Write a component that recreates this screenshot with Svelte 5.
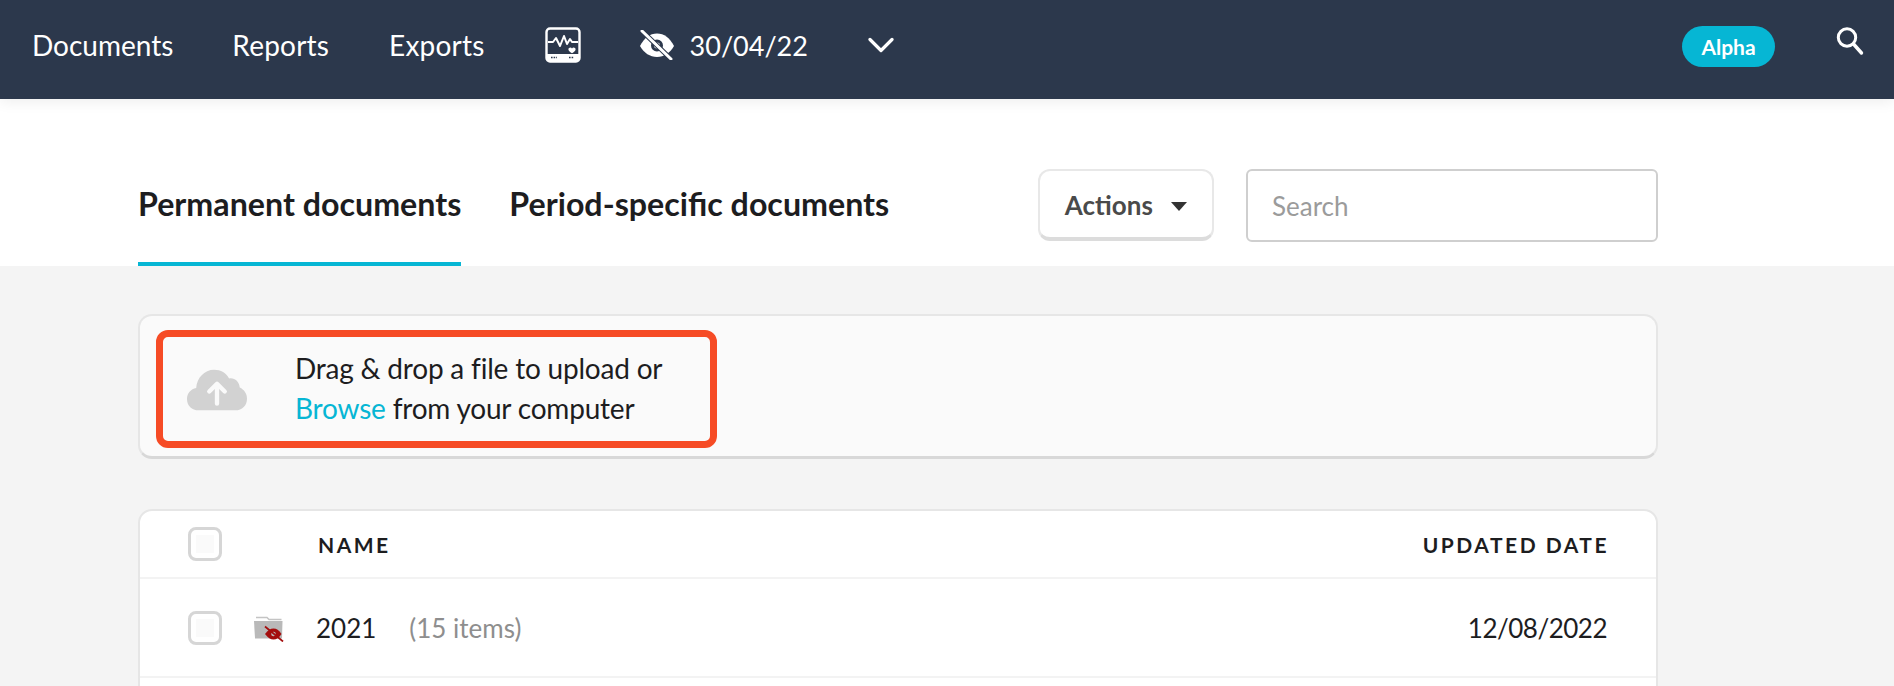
<script>
  let tabs = ["Permanent documents", "Period-specific documents"];
  let active = 0;
</script>

<div class="page">
  <nav class="topbar">
    <a class="nav-link first" href="#docs">Documents</a>
    <a class="nav-link" href="#reports">Reports</a>
    <a class="nav-link" href="#exports">Exports</a>
    <svg class="monitor" width="36" height="36" viewBox="0 0 36 36" fill="none">
      <rect x="1.5" y="1.5" width="33" height="33" rx="3.5" stroke="#fff" stroke-width="2.4" />
      <path d="M2 27h32v4a3 3 0 0 1-3 3H5a3 3 0 0 1-3-3z" fill="#fff" />
      <path d="M3 15h5l3-4 4 8 4-10 3 8 3-5 2 3h6" stroke="#fff" stroke-width="2" stroke-linejoin="round" />
      <path d="M27 21.5c1-1.6 3.6-.9 3.6 1 0 1.5-2 2.700-3.600 3.700-1.600-1-3.600-2.200-3.600-3.700 0-1.900 2.600-2.600 3.600-1z" fill="#fff" />
      <path d="M6 30.500h6M24 30.500h5" stroke="#2c384c" stroke-width="1.600" stroke-dasharray="1.600 1" />
    </svg>
    <div class="period">
      <svg width="36" height="30" viewBox="0 0 36 30" fill="none">
        <path d="M1 16C5 8 11 3.500 18 3.500S31 8 35 16c-4 7-10 11-17 11S5 23 1 16z" fill="#fff" />
        <circle cx="18" cy="15.500" r="4.500" fill="none" stroke="#2c384c" stroke-width="3" />
        <path d="M3 1l29 28" stroke="#2c384c" stroke-width="5" />
        <path d="M3 1l29 28" stroke="#fff" stroke-width="3" stroke-linecap="round" />
      </svg>
      <span>30/04/22</span>
    </div>
    <svg class="chevron" width="26" height="16" viewBox="0 0 26 16" fill="none">
      <path d="M2 2.500l11 11 11-11" stroke="#fff" stroke-width="3.200" stroke-linecap="round" stroke-linejoin="round" />
    </svg>
    <span class="alpha">Alpha</span>
    <svg class="search-icon" width="30" height="30" viewBox="0 0 30 30" fill="none">
      <circle cx="12" cy="11.500" r="8.700" stroke="#fff" stroke-width="3" />
      <path d="M18.500 18l8 9" stroke="#fff" stroke-width="3.400" stroke-linecap="round" />
    </svg>
  </nav>

  <header class="subhead">
    <div class="inner subhead-row">
      <div class="tabs">
        {#each tabs as tab, i}
          <button class="tab" class:active={i === active}>{tab}</button>
        {/each}
      </div>
      <div class="tools">
        <button class="actions">Actions <i class="caret"></i></button>
        <input class="search" type="text" placeholder="Search" />
      </div>
    </div>
  </header>

  <main class="inner content">
    <section class="upload-card">
      <div class="dropzone">
        <svg class="cloud" width="60" height="42" viewBox="0 0 62 42">
          <path d="M12 42C5 42 0 37 0 30.500 0 24.500 4 20 9.500 19 10 8.500 18 0 28 0c7 0 12.500 3.500 15.500 9 5.500-1 10.500 3 11 9.500C59 20.500 62 25 62 30c0 7-5 12-12 12z" fill="#d2d2d2" />
          <path d="M31 35V15M23 22.500l8-8 8 8" stroke="#fafafa" stroke-width="4.500" stroke-linecap="round" stroke-linejoin="round" fill="none" />
        </svg>
        <p>Drag &amp; drop a file to upload or<br /><a href="#browse">Browse</a> from your computer</p>
      </div>
    </section>

    <section class="table-card">
      <div class="row head">
        <span class="check"></span>
        <span class="name-col">NAME</span>
        <span class="date-col">UPDATED DATE</span>
      </div>
      <div class="row item">
        <span class="check"></span>
        <svg class="folder" width="32" height="28" viewBox="0 0 32 28">
          <path d="M3 3.500h11l2 2h12.500" stroke="#c4c4c4" stroke-width="1.500" fill="none" />
          <path d="M1 7h28.500L29 24.500H2z" fill="#b9b9b9" />
          <path d="M12 20c3-4 5.500-5.500 8.500-5.500s5.500 1.500 8 5.500c-2.500 4-5 5.500-8 5.500S15 24 12 20z" fill="#a40d0d" />
          <circle cx="20.500" cy="20" r="2.300" fill="#b9b9b9" />
          <path d="M12 12.500l18 15" stroke="#a40d0d" stroke-width="1.700" />
        </svg>
        <span class="year">2021</span>
        <span class="count">(15 items)</span>
        <span class="date-col value">12/08/2022</span>
      </div>
      <div class="row empty"></div>
    </section>
  </main>
</div>

<style>
  :global(body) {
    margin: 0;
    background: #f4f4f4;
  }

  .page {
    height: 686px;
    overflow: hidden;
    font-family: Lato, "Liberation Sans", sans-serif;
    color: #1d1d1f;
  }

  .topbar {
    position: relative;
    z-index: 2;
    height: 99px;
    box-sizing: border-box;
    display: flex;
    align-items: center;
    padding: 0 29px 9px 32px;
    background: #2c384c;
    box-shadow: 0 2px 14px rgba(0, 0, 0, 0.08);
    color: #fff;
  }

  .nav-link {
    margin-right: 60px;
    color: #fff;
    font-size: 28px;
    letter-spacing: 0.2px;
    text-decoration: none;
  }

  .nav-link.first {
    margin-right: 59px;
    letter-spacing: 0;
  }

  .monitor {
    margin-right: 58px;
  }

  .period {
    display: flex;
    align-items: center;
    gap: 15px;
    margin-right: 60px;
    font-size: 27px;
  }

  .alpha {
    margin-left: auto;
    margin-right: 60px;
    width: 93px;
    height: 41px;
    line-height: 41px;
    margin-top: 3px;
    border-radius: 21px;
    background: #06b6d4;
    text-align: center;
    font-size: 21px;
    font-weight: 700;
  }

  .search-icon {
    margin-top: -9px;
  }

  .inner {
    width: 1520px;
    margin-left: 138px;
  }

  .subhead {
    background: #fff;
    height: 167px;
  }

  .subhead-row {
    height: 100%;
    display: flex;
    justify-content: space-between;
  }

  .tabs {
    display: flex;
    gap: 48px;
  }

  .tab {
    height: 167px;
    box-sizing: border-box;
    padding: 46px 0 0;
    border: none;
    border-bottom: 4px solid transparent;
    background: none;
    font: 700 32.200px Lato, sans-serif;
    color: #1d1d1f;
    cursor: pointer;
  }

  .tab.active {
    border-bottom-color: #06b6d4;
  }

  .tools {
    display: flex;
    align-items: flex-start;
    gap: 32px;
    padding-top: 70px;
  }

  .actions {
    width: 176px;
    height: 72px;
    box-sizing: border-box;
    padding-top: 2px;
    border: 2px solid #e8e8e8;
    border-bottom: 4px solid #dcdcdc;
    border-radius: 12px;
    background: #fff;
    font: 700 26px Lato, sans-serif;
    color: #4a4a4a;
    cursor: pointer;
  }

  .caret {
    display: inline-block;
    width: 0;
    height: 0;
    margin-left: 12px;
    vertical-align: 4px;
    border: 8px solid transparent;
    border-bottom: 0;
    border-top: 9px solid #333;
  }

  .search {
    width: 412px;
    height: 73px;
    box-sizing: border-box;
    padding: 0 24px;
    border: 2px solid #cfcfcf;
    border-radius: 6px;
    background: #fff;
    font: 26px Lato, sans-serif;
    outline: none;
  }

  .search::placeholder {
    color: #9b9b9b;
  }

  .content {
    padding-top: 48px;
  }

  .upload-card {
    height: 145px;
    box-sizing: border-box;
    padding: 14px 16px;
    border: 2px solid #e6e6e6;
    border-bottom: 3px solid #d8d8d8;
    border-radius: 14px;
    background: #fafafa;
  }

  .dropzone {
    width: 561px;
    height: 118px;
    box-sizing: border-box;
    display: flex;
    align-items: center;
    padding-left: 24px;
    border: 7px solid #f64b25;
    border-radius: 12px;
  }

  .cloud {
    margin-right: 48px;
    margin-top: 2px;
  }

  .dropzone p {
    margin: -2px 0 0;
    font-size: 28px;
    letter-spacing: -0.2px;
    line-height: 40px;
  }

  .dropzone a {
    color: #06b6d4;
    text-decoration: none;
  }

  .table-card {
    margin-top: 50px;
    border: 2px solid #e6e6e6;
    border-radius: 14px;
    background: #fff;
  }

  .row {
    display: flex;
    align-items: center;
    padding: 0 49px 0 48px;
    border-bottom: 2px solid #f3f3f3;
  }

  .head {
    height: 66px;
  }

  .item {
    height: 97px;
    font-size: 26px;
  }

  .check {
    width: 34px;
    height: 34px;
    box-sizing: border-box;
    flex: none;
    border: 3px solid #d6d6d6;
    border-radius: 8px;
    background: #fff;
    box-shadow: inset 0 0 0 5px #fff, inset 0 0 0 20px #fafafa;
  }

  .name-col {
    margin-left: 96px;
    font-size: 21px;
    font-weight: 700;
    letter-spacing: 2.500px;
  }

  .head .date-col {
    font-size: 21px;
    font-weight: 700;
    letter-spacing: 2.500px;
    margin-right: -2px;
  }

  .date-col {
    margin-left: auto;
  }

  .date-col.value {
    letter-spacing: -0.5px;
  }

  .folder {
    margin-left: 31px;
    margin-right: 31px;
  }

  .count {
    margin-left: 33px;
    color: #8e8e8e;
  }

  .empty {
    height: 60px;
    border: none;
  }
</style>
